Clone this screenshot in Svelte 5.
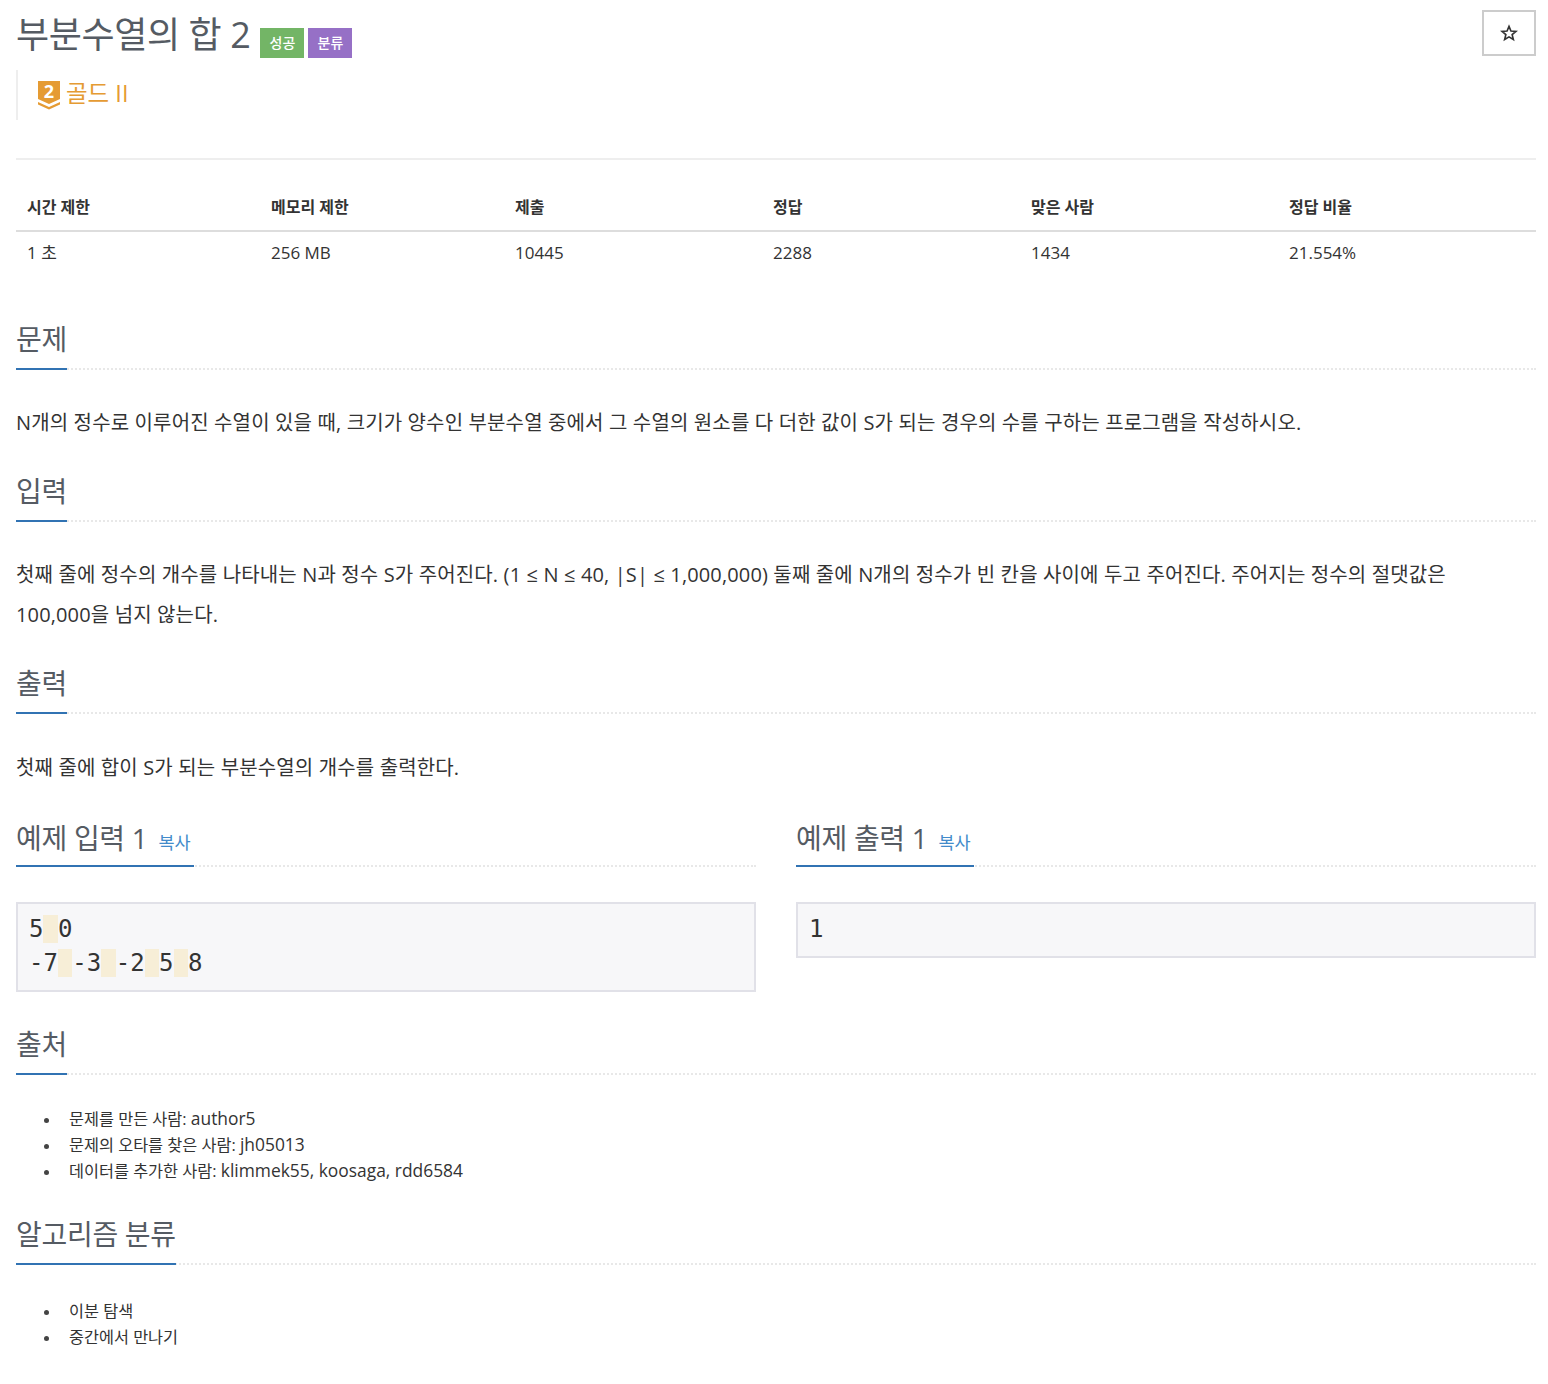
<script>
	let stats = [
		{ label: '시간 제한', value: '1 초' },
		{ label: '메모리 제한', value: '256 MB' },
		{ label: '제출', value: '10445' },
		{ label: '정답', value: '2288' },
		{ label: '맞은 사람', value: '1434' },
		{ label: '정답 비율', value: '21.554%' }
	];
	let sources = [
		{ role: '문제를 만든 사람:', names: 'author5' },
		{ role: '문제의 오타를 찾은 사람:', names: 'jh05013' },
		{ role: '데이터를 추가한 사람:', names: 'klimmek55, koosaga, rdd6584' }
	];
	let tags = ['이분 탐색', '중간에서 만나기'];
</script>

<main class="page">
	<header class="title-row">
		<h1>부분수열의 합 2</h1>
		<span class="label green">성공</span>
		<span class="label purple">분류</span>
		<button class="star" aria-label="즐겨찾기">
			<svg width="18" height="18" viewBox="0 0 24 24" fill="none" stroke="#333" stroke-width="2.2">
				<path d="M12 3.2l2.6 6.2 6.7.5-5.1 4.3 1.6 6.5L12 17.2l-5.8 3.5 1.6-6.5-5.1-4.3 6.7-.5z" />
			</svg>
		</button>
	</header>

	<blockquote class="tier">
		<svg width="24" height="28" viewBox="0 0 24 28">
			<path d="M1 0h22v18l-11 5-11-5z" fill="#e59b33" />
			<path d="M1 21l11 5 11-5v2.500l-11 5-11-5z" fill="#e59b33" />
			<text x="12" y="17" text-anchor="middle" class="tier-num">2</text>
		</svg>
		<span>골드 II</span>
	</blockquote>

	<hr />

	<table>
		<thead>
			<tr>
				{#each stats as s}
					<th>{s.label}</th>
				{/each}
			</tr>
		</thead>
		<tbody>
			<tr>
				{#each stats as s}
					<td>{s.value}</td>
				{/each}
			</tr>
		</tbody>
	</table>

	<section class="first">
		<div class="headline"><h2>문제</h2></div>
		<p>N개의 정수로 이루어진 수열이 있을 때, 크기가 양수인 부분수열 중에서 그 수열의 원소를 다 더한 값이 S가 되는 경우의 수를 구하는 프로그램을 작성하시오.</p>
	</section>

	<section>
		<div class="headline"><h2>입력</h2></div>
		<p>첫째 줄에 정수의 개수를 나타내는 N과 정수 S가 주어진다. (1 ≤ N ≤ 40, |S| ≤ 1,000,000) 둘째 줄에 N개의 정수가 빈 칸을 사이에 두고 주어진다. 주어지는 정수의 절댓값은 <span class="nowrap">100,000을</span> 넘지 않는다.</p>
	</section>

	<section class="output">
		<div class="headline"><h2>출력</h2></div>
		<p>첫째 줄에 합이 S가 되는 부분수열의 개수를 출력한다.</p>
	</section>

	<div class="samples">
		<div>
			<div class="headline"><h2>예제 입력 1 <a href="#copy" class="copy">복사</a></h2></div>
			<pre>5<mark> </mark>0
-7<mark> </mark>-3<mark> </mark>-2<mark> </mark>5<mark> </mark>8</pre>
		</div>
		<div>
			<div class="headline"><h2>예제 출력 1 <a href="#copy" class="copy">복사</a></h2></div>
			<pre>1</pre>
		</div>
	</div>

	<section class="after-samples">
		<div class="headline"><h2>출처</h2></div>
		<ul>
			{#each sources as s}
				<li>{s.role} <span class="names">{s.names}</span></li>
			{/each}
		</ul>
	</section>

	<section class="tags">
		<div class="headline"><h2>알고리즘 분류</h2></div>
		<ul>
			{#each tags as t}
				<li>{t}</li>
			{/each}
		</ul>
	</section>
</main>

<style>
	:global(body) {
		margin: 0;
		background: #fff;
		color: #333;
		font-family: "Open Sans", "Noto Sans CJK KR", sans-serif;
	}

	.page {
		padding: 0 12px 0 16px;
		height: 1384px;
		box-sizing: border-box;
		overflow: hidden;
	}

	.title-row {
		display: flex;
		align-items: flex-start;
		height: 70px;
		box-sizing: border-box;
		padding-top: 10px;
	}

	h1 {
		margin: 0;
		font-size: 36px;
		font-weight: 400;
		line-height: 50px;
		color: #555b63;
		letter-spacing: -0.4px;
	}

	.label {
		display: block;
		margin-top: 18px;
		margin-left: 4px;
		width: 44px;
		height: 30px;
		line-height: 30px;
		text-align: center;
		font-size: 14px;
		font-weight: 500;
		color: #fff;
	}

	.green {
		margin-left: 10px;
		background: #73b566;
	}

	.purple {
		background: #9670c6;
	}

	.star {
		margin-left: auto;
		width: 54px;
		height: 46px;
		padding: 0;
		border: 2px solid #ccc;
		background: #fff;
		display: flex;
		align-items: center;
		justify-content: center;
	}

	.tier {
		margin: 0;
		height: 50px;
		box-sizing: border-box;
		border-left: 2px solid #eee;
		padding: 11px 0 0 19px;
		display: flex;
		align-items: flex-start;
		gap: 5px;
		font-size: 23.500px;
		line-height: 24px;
		color: #e59b33;
	}

	.tier svg {
		flex: none;
		overflow: visible;
	}

	.tier-num {
		font: 700 18px "Open Sans", sans-serif;
		fill: #fff;
	}

	hr {
		margin: 38px 0 0;
		border: 0;
		border-top: 2px solid #eee;
	}

	table {
		width: 100%;
		margin-top: 27px;
		border-collapse: collapse;
		table-layout: fixed;
		font-size: 17px;
	}

	th {
		text-align: left;
		font-weight: 700;
		font-size: 16px;
		padding: 6px 11px 9px;
		line-height: 28px;
		border-bottom: 2px solid #ddd;
		color: #333;
	}

	th:nth-child(1), th:nth-child(2) {
		width: 244px;
		box-sizing: border-box;
	}

	th:nth-child(3), th:nth-child(4), th:nth-child(5) {
		width: 258px;
		box-sizing: border-box;
	}

	td {
		padding: 7px 11px 8px;
		line-height: 28px;
		color: #333;
	}

	.first {
		margin-top: 45px;
	}

	.headline {
		border-bottom: 2px dotted #e8e8e8;
		margin-bottom: 33px;
		height: 48px;
	}

	.headline h2 {
		display: inline-block;
		margin: 0;
		height: 48px;
		border-bottom: 2px solid #3173b3;
		font-size: 28px;
		font-weight: 400;
		line-height: 39px;
		color: #555b63;
		letter-spacing: -0.3px;
		white-space: nowrap;
	}

	p {
		margin: 0 0 29px;
		font-size: 20px;
		line-height: 40px;
		color: #333;
		letter-spacing: 0.14px;
	}

	.nowrap {
		white-space: nowrap;
	}

	.output .headline {
		margin-bottom: 34px;
	}

	.copy {
		font-size: 17.500px;
		color: #428bca;
		text-decoration: none;
		margin-left: 4px;
		letter-spacing: 0;
		font-weight: 400;
	}

	.samples {
		display: grid;
		grid-template-columns: 1fr 1fr;
		gap: 40px;
		align-items: start;
		margin-top: 6px;
	}

	.samples .headline {
		margin-bottom: 35px;
	}

	.samples .headline h2 {
		line-height: 42px;
		padding-right: 3px;
	}

	pre {
		margin: 0;
		padding: 8px 11px 10px;
		background: #f7f7f9;
		border: 2px solid #e1e1e8;
		font-family: "DejaVu Sans Mono", monospace;
		font-size: 24px;
		line-height: 34px;
		color: #333;
	}

	mark {
		background: #f7eed7;
		color: inherit;
	}

	.after-samples {
		margin-top: 33px;
	}

	.after-samples .headline {
		margin-bottom: 31px;
	}

	ul {
		margin: 0;
		padding: 0 0 0 53px;
		list-style: none;
		font-size: 16.300px;
		line-height: 26px;
		color: #333;
	}

	li {
		height: 26px;
	}

	.names {
		font-size: 17.400px;
		line-height: 1;
	}

	li::before {
		content: "";
		display: inline-block;
		width: 5px;
		height: 5px;
		margin: 0 20px 0 -25px;
		border-radius: 50%;
		background: #444;
		vertical-align: middle;
	}

	.tags {
		margin-top: 31px;
	}

	.tags .headline {
		margin-bottom: 33px;
	}
</style>
